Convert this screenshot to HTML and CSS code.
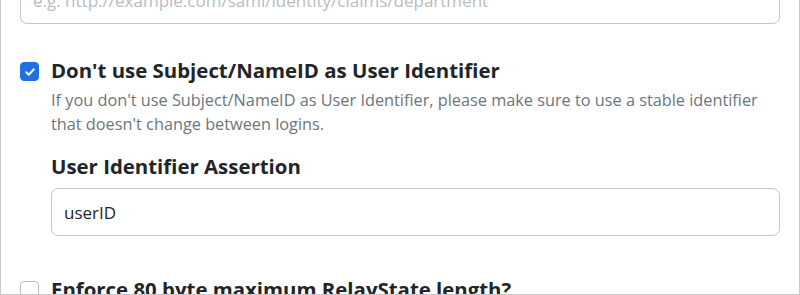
FILE: index.html
```html
<!DOCTYPE html>
<html lang="en">
<head>
    <meta charset="UTF-8">
    <meta name="viewport" content="width=device-width, initial-scale=1.0">
    <title>SAML Settings</title>
    <link rel="stylesheet" href="styles.css">
</head>
<body>
    <div class="panel">
        <div class="panel-inner">
            <!-- Pole z atrybutem grupy (ucięte u góry) -->
            <input type="text" class="text-input top-input" placeholder="e.g. http://example.com/saml/identity/claims/department">

            <div class="check-row">
                <span class="check-box checked">
                    <svg width="12" height="12" viewBox="0 0 12 12">
                        <path d="M2.2 6.3 L4.8 8.8 L9.8 3.4" fill="none" stroke="#fff" stroke-width="2" stroke-linecap="round" stroke-linejoin="round"/>
                    </svg>
                </span>
                <div class="check-body">
                    <div class="check-title">Don't use Subject/NameID as User Identifier</div>
                    <div class="check-help">If you don't use Subject/NameID as User Identifier, please make sure to use a stable identifier that doesn't change between logins.</div>

                    <div class="field-label">User Identifier Assertion</div>
                    <input type="text" class="text-input" value="userID">
                </div>
            </div>

            <div class="check-row last-row">
                <span class="check-box"></span>
                <div class="check-body">
                    <div class="check-title">Enforce 80 byte maximum RelayState length?</div>
                </div>
            </div>
        </div>
    </div>
</body>
</html>
```

FILE: styles.css
```css
body {
    font-family: "Open Sans", sans-serif;
    margin: 0;
    height: 295px;
    overflow: hidden;
    background-color: #fff;
    color: #212529;
}

.panel {
    height: 294px;
    border: 1px solid #c8c8c8;
    border-top: none;
    overflow: hidden;
}

.panel-inner {
    margin-top: -24px;
    padding: 0 19px;
}

.text-input {
    display: block;
    box-sizing: border-box;
    width: 100%;
    height: 48px;
    padding: 0 12px;
    border: 1px solid #c3c6ca;
    border-radius: 7px;
    font-family: inherit;
    font-size: 17px;
    color: #212529;
    background-color: #fff;
    outline: none;
}

.text-input::placeholder {
    color: #b8bcc1;
}

.top-input {
    margin-bottom: 31px;
}

.check-row {
    display: flex;
    align-items: flex-start;
}

.check-box {
    flex: none;
    box-sizing: border-box;
    width: 19px;
    height: 19px;
    margin-top: 7px;
    margin-right: 12px;
    border: 1px solid #b9bcc0;
    border-radius: 4px;
    display: flex;
    align-items: center;
    justify-content: center;
}

.check-box.checked {
    background-color: #1f6fe0;
    border-color: #1f6fe0;
}

.check-body {
    flex: 1;
}

.check-title {
    font-size: 20.4px;
    font-weight: bold;
    line-height: 30px;
}

.check-help {
    margin-top: 3px;
    font-size: 16.3px;
    line-height: 24px;
    color: #6c757d;
}

.field-label {
    margin-top: 15px;
    margin-bottom: 7px;
    font-size: 20.4px;
    font-weight: bold;
    line-height: 30px;
}

.last-row {
    margin-top: 38px;
}
```
